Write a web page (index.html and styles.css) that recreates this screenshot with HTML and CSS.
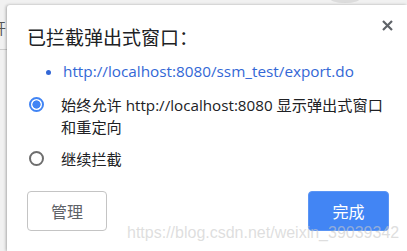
FILE: index.html
```html
<!DOCTYPE html>
<html lang="zh-CN">

<head>
    <meta charset="UTF-8">
    <meta name="viewport" content="width=device-width, initial-scale=1.0">
    <title>已拦截弹出式窗口</title>
    <link rel="stylesheet" href="styles.css">
</head>

<body>
    <div class="fane"></div>
    <div class="side">
        <div class="side_tekst">开</div>
    </div>

    <div class="dialog">
        <div class="topp">
            <h1>已拦截弹出式窗口：</h1>
            <span class="lukk">
                <svg width="11" height="11" viewBox="0 0 11 11">
                    <path d="M1 1 L10 10 M10 1 L1 10" stroke="#5f6368" stroke-width="2.2" />
                </svg>
            </span>
        </div>

        <ul class="lenker">
            <li><a href="#">http://localhost:8080/ssm_test/export.do</a></li>
        </ul>

        <div class="valg">
            <span class="radio valgt"></span>
            <span class="valg_tekst">始终允许 http://localhost:8080 显示弹出式窗口<br>和重定向</span>
        </div>
        <div class="valg">
            <span class="radio"></span>
            <span class="valg_tekst">继续拦截</span>
        </div>

        <div class="knapper">
            <button class="knapp">管理</button>
            <button class="knapp blaa">完成</button>
        </div>

        <div class="vannmerke">https://blog.csdn.net/weixin_39039342</div>
    </div>
</body>

</html>
```
FILE: styles.css
```css
body {
    margin: 0;
    padding: 5px 0 0 0;
    background-color: #f1f1f1;
    display: flex;
    height: 246px;
    overflow: hidden;
    font-family: "Open Sans", "Noto Sans CJK SC", sans-serif;
}

/* grå fane oppe til høyre */
.fane {
    position: absolute;
    left: 330px;
    top: -6px;
    width: 30px;
    height: 9px;
    border-radius: 50%;
    background-color: #dcdcdc;
}

.side {
    width: 7px;
    overflow: hidden;
    flex-shrink: 0;
}

.side_tekst {
    margin-top: 12px;
    margin-left: -9px;
    font-size: 15px;
    color: #555;
    height: 32px;
    border-bottom: 1px solid #ccc;
}

.dialog {
    position: relative;
    flex: 1;
    background-color: #fff;
    border-top-left-radius: 3px;
    box-shadow: -1px 0 3px rgba(0, 0, 0, 0.3);
    padding: 19px 14px 0 20px;
}

.topp {
    display: flex;
    justify-content: space-between;
    align-items: flex-start;
}

h1 {
    margin: 0;
    font-size: 19px;
    line-height: 26px;
    font-weight: normal;
    color: #202124;
    font-family: "Noto Sans CJK SC", sans-serif;
}

.lukk {
    display: flex;
    margin-top: -4px;
}

.lenker {
    margin: 11px 0 0 0;
    padding-left: 36px;
    font-size: 15.3px;
    line-height: 20px;
}

.lenker li {
    color: #3367d6;
}

.lenker a {
    color: #3367d6;
    text-decoration: none;
}

.valg {
    display: flex;
    align-items: flex-start;
    margin-top: 10px;
    font-size: 15.2px;
    color: #202124;
    line-height: 22px;
}

.lenker + .valg {
    margin-top: 13px;
}

.valg_tekst {
    font-family: "Open Sans", "Noto Sans CJK SC", sans-serif;
}

.radio {
    width: 11px;
    height: 11px;
    border: 2px solid #6e6e6e;
    border-radius: 50%;
    margin: 3px 17px 0 2px;
    flex-shrink: 0;
}

.radio.valgt {
    border-color: #4285f4;
    background: radial-gradient(circle, #4285f4 0 3.8px, #fff 4.4px);
}

.knapper {
    display: flex;
    justify-content: space-between;
    margin-top: 21px;
    padding-right: 4px;
}

.knapp {
    width: 80px;
    height: 40px;
    border: 1px solid #c4c4c4;
    border-radius: 4px;
    background-color: #fff;
    font-size: 16px;
    color: #5f6368;
    font-family: "Noto Sans CJK SC", sans-serif;
}

.knapp.blaa {
    width: 81px;
    background-color: #4285f4;
    border-color: #5b95f5;
    color: #fff;
}

.vannmerke {
    position: absolute;
    left: 120px;
    top: 219px;
    font-family: "Liberation Sans", Arial, sans-serif;
    font-size: 16px;
    color: rgba(200, 200, 200, 0.6);
}
```
